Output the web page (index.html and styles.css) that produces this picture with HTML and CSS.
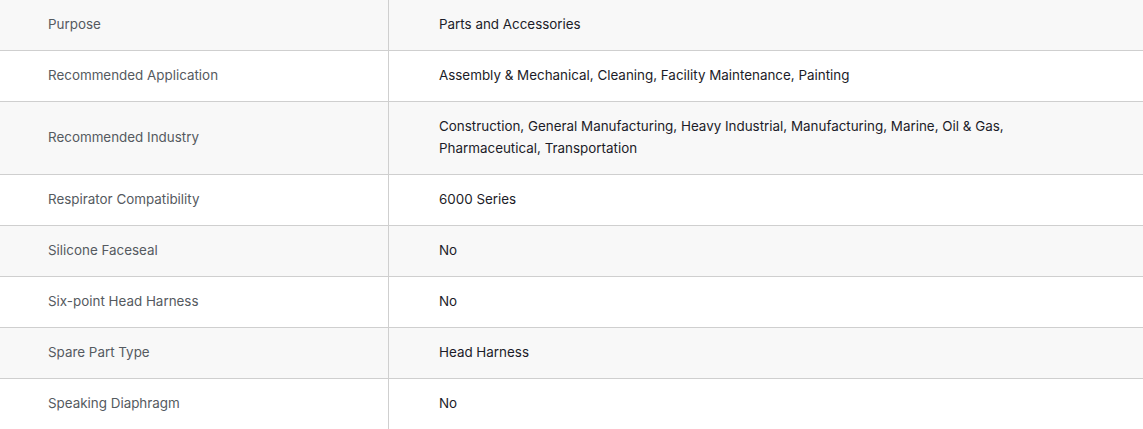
FILE: index.html
```html
<!DOCTYPE html>
<html>
<head>
<meta charset="utf-8">
<link rel="stylesheet" href="styles.css">
</head>
<body>
<table class="specs">
  <tbody>
    <tr><td class="label">Purpose</td><td class="value">Parts and Accessories</td></tr>
    <tr><td class="label">Recommended Application</td><td class="value">Assembly &amp; Mechanical, Cleaning, Facility Maintenance, Painting</td></tr>
    <tr><td class="label">Recommended Industry</td><td class="value">Construction, General Manufacturing, Heavy Industrial, Manufacturing, Marine, Oil &amp; Gas,<br>Pharmaceutical, Transportation</td></tr>
    <tr><td class="label">Respirator Compatibility</td><td class="value">6000 Series</td></tr>
    <tr><td class="label">Silicone Faceseal</td><td class="value">No</td></tr>
    <tr><td class="label">Six-point Head Harness</td><td class="value">No</td></tr>
    <tr><td class="label">Spare Part Type</td><td class="value">Head Harness</td></tr>
    <tr><td class="label">Speaking Diaphragm</td><td class="value">No</td></tr>
  </tbody>
</table>
</body>
</html>
```
FILE: styles.css
```css
html, body {
  margin: 0;
  padding: 0;
  background: #fff;
}
.specs {
  width: 1143px;
  border-collapse: collapse;
  font-family: Inter, "Liberation Sans", sans-serif;
  font-size: 13.4px;
  line-height: 22px;
}
.specs tr:nth-child(odd) {
  background: #f8f8f8;
}
.specs tr:nth-child(even) {
  background: #fff;
}
.specs td {
  padding: 13px 0 15px;
  vertical-align: middle;
  border-bottom: 1px solid #cfcfcf;
}
.specs tr:last-child td {
  border-bottom: none;
}
.specs .label {
  width: 340px;
  padding-left: 48px;
  color: #555a60;
  border-right: 1px solid #cfcfcf;
}
.specs .value {
  padding-left: 50px;
  color: #1c1c28;
}
```
